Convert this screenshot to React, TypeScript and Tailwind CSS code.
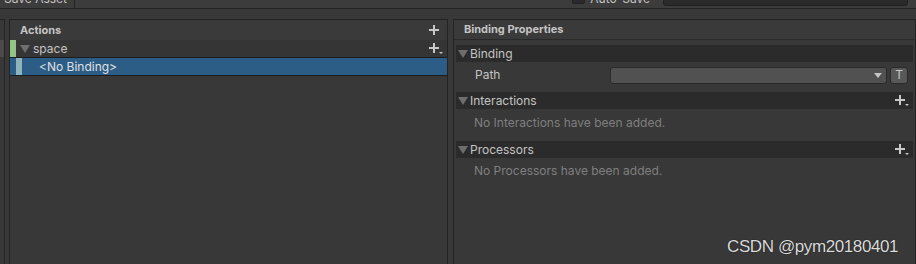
import React from "react";

const font = { fontFamily: 'Inter, "Noto Sans", "Liberation Sans", sans-serif' };

function Plus({ drop = false }: { drop?: boolean }) {
  return (
    <svg width="14" height="13" viewBox="0 0 14 13" className="block">
      <rect x="4" y="1" width="2" height="10" fill="#c8c8c8" />
      <rect x="0" y="5" width="10" height="2" fill="#c8c8c8" />
      {drop && <polygon points="10,10 14,10 12,12" fill="#c8c8c8" />}
    </svg>
  );
}

function Tri() {
  return (
    <svg width="10" height="9" viewBox="0 0 10 9" className="block">
      <polygon points="0,1 10,1 5,9" fill="#6e6e6e" />
    </svg>
  );
}

function Foldout({ title, plus = false }: { title: string; plus?: boolean }) {
  return (
    <div className="flex h-[17px] items-center bg-[#2b2b2b] pl-[2px] pr-[4px]">
      <Tri />
      <span className="ml-[2px] flex-1 text-[12px] text-[#c4c4c4]">{title}</span>
      {plus && <Plus drop />}
    </div>
  );
}

export default function App() {
  return (
    <div className="relative flex h-[264px] w-[916px] flex-col overflow-hidden bg-[#383838]" style={font}>
      {/* toolbar */}
      <div className="relative flex h-[9px] shrink-0 overflow-hidden border-b border-[#242424] bg-[#3c3c3c]">
        <div className="flex h-[8px] w-[75px] items-start border-r border-[#242424] pl-[4px]">
          <span className="mt-[-8px] text-[12px] leading-[14px] text-[#c4c4c4]">Save Asset</span>
        </div>
        <div className="flex-1" />
        <div className="flex items-start">
          <div className="mt-[-8px] h-[12px] w-[13px] rounded-[2px] border border-[#222] bg-[#2a2a2a]" />
          <span className="ml-[5px] mt-[-8px] text-[12px] leading-[14px] text-[#c4c4c4]">Auto-Save</span>
        </div>
        <div className="ml-[13px] mr-[8px] mt-[-12px] h-[18px] w-[245px] rounded-[3px] border border-[#1f1f1f] bg-[#2a2a2a]" />
      </div>

      <div className="flex flex-1 pt-[10px]">
        {/* left stub */}
        <div className="flex w-[5px] shrink-0 flex-col border-r border-t border-[#232323]">
          <div className="h-[20px]" />
          <div className="h-[17px] bg-[#4a4a4a]" />
        </div>
        <div className="w-[4px] shrink-0" />

        {/* Actions panel */}
        <div className="flex w-[439px] shrink-0 flex-col border border-b-0 border-[#232323]">
          <div className="flex h-[20px] items-center bg-[#3a3a3a] pl-[10px] pr-[4px]">
            <span className="flex-1 text-[11px] font-bold text-[#c4c4c4]">Actions</span>
            <Plus />
          </div>
          <div className="flex h-[17px] items-center bg-[#353535] pr-[4px]">
            <div className="h-full w-[6px] bg-[#93c386]" />
            <div className="ml-[4px]"><Tri /></div>
            <span className="ml-[3px] mt-[1px] flex-1 text-[12px] text-[#c4c4c4]">space</span>
            <Plus drop />
          </div>
          <div className="flex h-[19px] items-center border-y border-[#1c1c1c] bg-[#2c5d87]">
            <div className="ml-[6px] h-full w-[6px] bg-[#8fb3bb]" />
            <span className="ml-[17px] text-[12px] text-[#e0e0e0]">&lt;No Binding&gt;</span>
          </div>
        </div>

        <div className="w-[5px] shrink-0" />

        {/* Binding properties panel */}
        <div className="flex w-[463px] shrink-0 flex-col border border-b-0 border-[#232323]">
          <div className="flex h-[20px] items-center border-b border-[#2a2a2a] bg-[#3a3a3a] pl-[10px]">
            <span className="text-[11px] font-bold text-[#c4c4c4]">Binding Properties</span>
          </div>
          <div className="flex flex-col pl-[2px] pr-[2px] pt-[5px]">
            <Foldout title="Binding" />
            <div className="flex h-[25px] items-center pt-[1px]">
              <span className="ml-[19px] w-[135px] text-[12px] text-[#c4c4c4]">Path</span>
              <div className="flex h-[17px] w-[277px] items-center justify-end rounded-[3px] border border-[#2a2a2a] bg-[#515151] pr-[4px]">
                <svg width="8" height="5" viewBox="0 0 8 5"><polygon points="0,0 8,0 4,5" fill="#c4c4c4" /></svg>
              </div>
              <div className="ml-[3px] flex h-[17px] w-[18px] items-center justify-center rounded-[3px] border border-[#2a2a2a] bg-[#585858] text-[12px] text-[#c4c4c4]">T</div>
            </div>
            <div className="h-[5px]" />
            <Foldout title="Interactions" plus />
            <div className="flex h-[27px] items-center pl-[18px] pt-[1px] text-[12px] text-[#7f7f7f]">No Interactions have been added.</div>
            <div className="h-[5px]" />
            <Foldout title="Processors" plus />
            <div className="flex h-[25px] items-center pl-[18px] pt-[1px] text-[12px] text-[#7f7f7f]">No Processors have been added.</div>
          </div>
        </div>
      </div>

      <div
        className="absolute left-[727px] top-[234px] text-[17px] tracking-[-0.4px] text-[#dcdcdc]"
        style={{ fontFamily: '"Liberation Sans", Arial, sans-serif', textShadow: "0 0 1px #000" }}
      >
        CSDN @pym20180401
      </div>
    </div>
  );
}
